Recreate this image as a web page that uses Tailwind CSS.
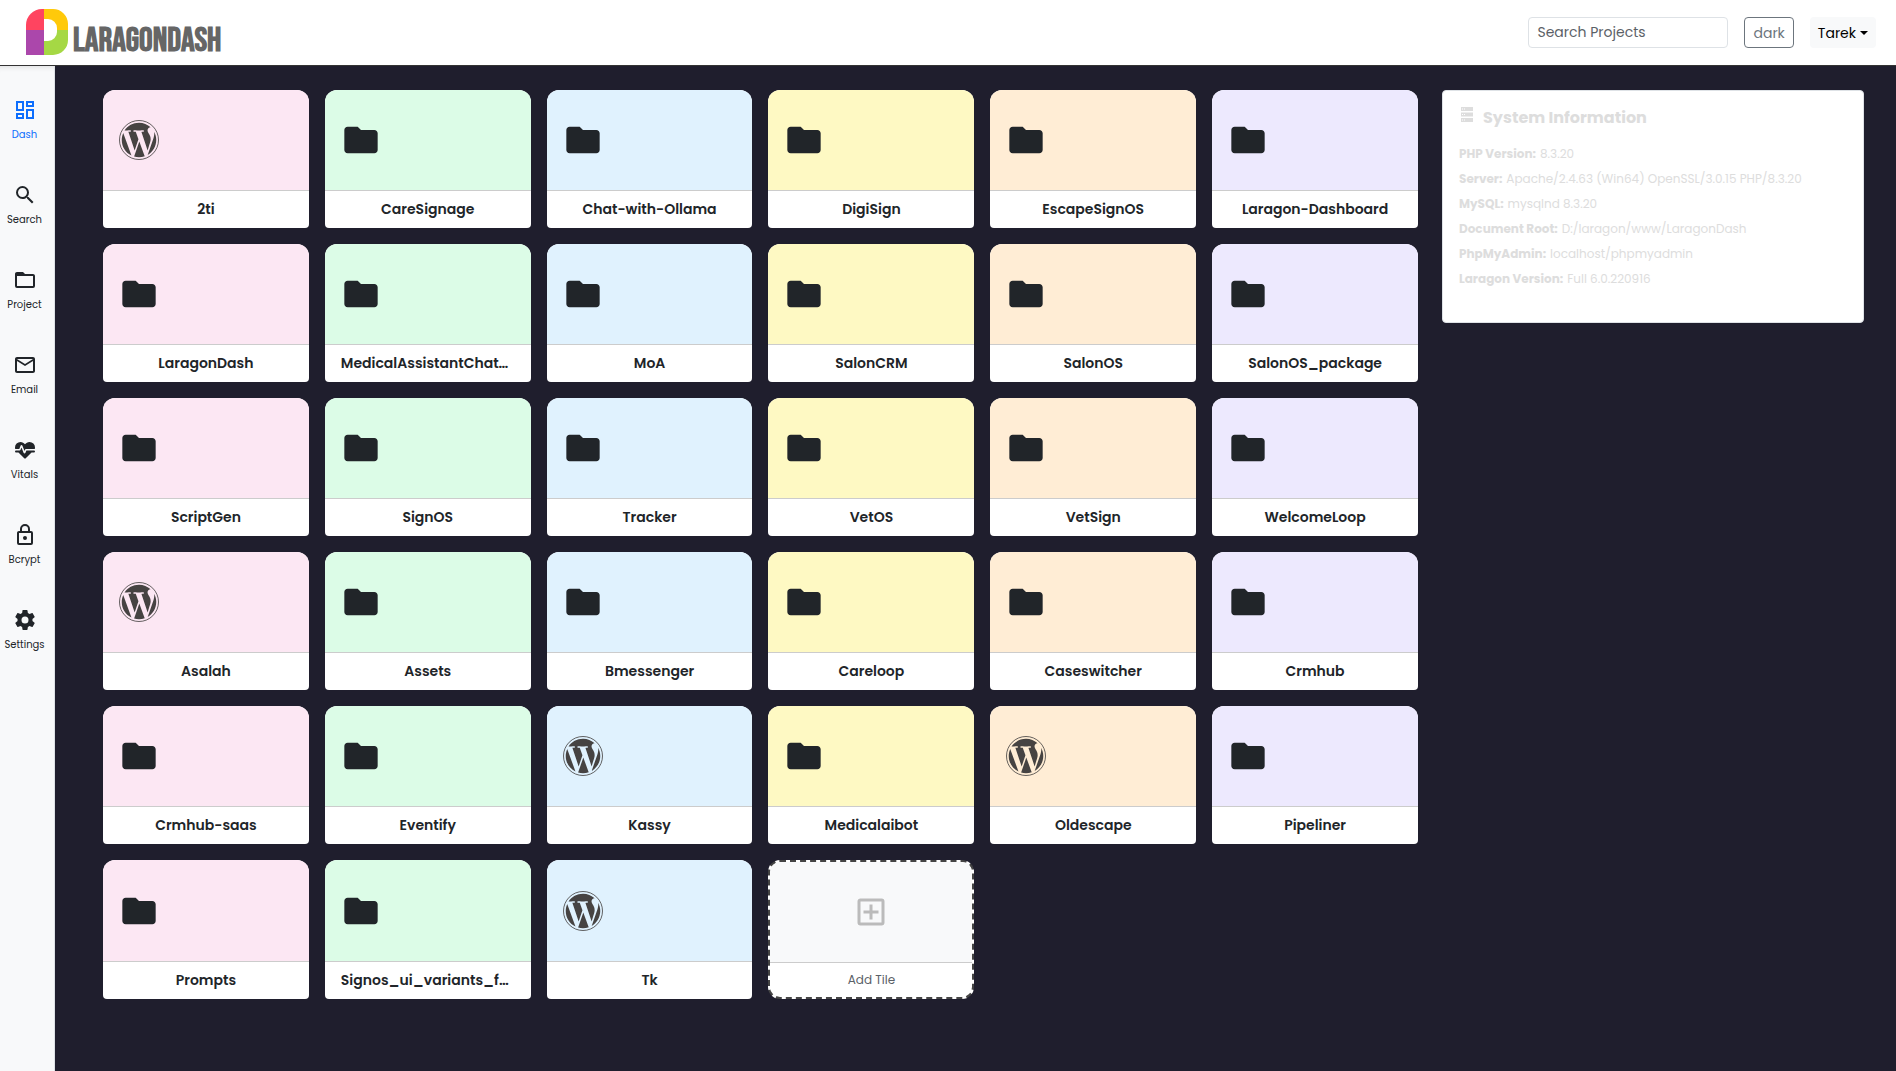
<!DOCTYPE html>
<html lang="en">
<head>
<meta charset="utf-8">
<meta name="viewport" content="width=device-width, initial-scale=1">
<title>LaragonDash</title>
<script src="https://cdn.jsdelivr.net/npm/@tailwindcss/browser@4"></script>
</head>
<body class="flex min-h-screen flex-col bg-[#1f1e2d] font-['Poppins','Inter',sans-serif] text-[#212529]">
<svg class="hidden" aria-hidden="true">
  <symbol id="folder" viewBox="0 0 24 24"><path d="M10 4H4c-1.11 0-2 .89-2 2v12c0 1.1.9 2 2 2h16c1.1 0 2-.9 2-2V8c0-1.11-.9-2-2-2h-8l-2-2z"/></symbol>
  <symbol id="wordpress" viewBox="0 0 24 24"><circle cx="12" cy="12" r="11.700" fill="none" stroke="currentColor" stroke-width=".5"/><path transform="translate(.48 .48) scale(.96)" d="M21.469 6.825c.84 1.537 1.318 3.3 1.318 5.175 0 3.979-2.156 7.456-5.363 9.325l3.295-9.527c.615-1.54.82-2.771.82-3.864 0-.405-.026-.78-.07-1.11m-7.981.105c.647-.03 1.232-.105 1.232-.105.582-.075.514-.93-.067-.899 0 0-1.755.135-2.88.135-1.064 0-2.85-.15-2.85-.15-.585-.03-.661.855-.075.885 0 0 .54.061 1.125.09l1.68 4.605-2.37 7.08L5.354 6.9c.649-.03 1.234-.1 1.234-.1.585-.075.516-.93-.065-.896 0 0-1.746.138-2.874.138-.2 0-.438-.008-.69-.015C4.911 3.15 8.235 1.215 12 1.215c2.809 0 5.365 1.072 7.286 2.833-.046-.003-.091-.009-.141-.009-1.06 0-1.812.923-1.812 1.914 0 .89.513 1.643 1.06 2.531.411.72.89 1.643.89 2.977 0 .915-.354 1.994-.821 3.479l-1.075 3.585-3.9-11.61.001.014zM12 22.784c-1.059 0-2.081-.153-3.048-.437l3.237-9.406 3.315 9.087c.024.053.05.101.078.149-1.12.393-2.325.609-3.582.609M1.211 12c0-1.564.336-3.05.935-4.39L7.29 21.709C3.694 19.96 1.212 16.271 1.211 12"/></symbol>
</svg>

<header class="flex h-[66px] items-center justify-between border-b border-[#333333] bg-white pr-5 pl-[26px]">
  <a href="#" class="flex items-end gap-1 pb-px" aria-label="LaragonDash home">
    <svg class="h-[46px] w-[43px]" viewBox="0 0 43 46" aria-hidden="true">
      <path fill="#ff4460" d="M0 21V16A16 16 0 0 1 16 0H18V21z"/>
      <path fill="#ab47ab" d="M0 21H18V46H0z"/>
      <path fill="#ffc90a" d="M18 0H27A15 15 0 0 1 42 15V21H31V19A9 9 0 0 0 22 10H18z"/>
      <path fill="#a5d844" d="M42 21V31A15 15 0 0 1 27 46H18V32H22A9 9 0 0 0 31 23V21z"/>
    </svg>
    <span class="font-['Bebas_Neue','Anton','Oswald','Roboto_Condensed','Liberation_Sans',sans-serif] text-[34px] leading-7 font-bold text-[#666666]">LARAGONDASH</span>
  </a>
  <div class="flex items-center gap-4 text-sm">
    <input type="text" aria-label="Search Projects" placeholder="Search Projects" class="h-[31px] w-[200px] rounded border border-[#dee2e6] bg-white px-2 placeholder:text-[#5b6167]">
    <button type="button" class="h-[31px] rounded border border-[#6c757d] px-2 text-[#6c757d]">dark</button>
    <button type="button" class="flex h-[31px] items-center gap-1 rounded bg-[#f8f9fa] px-2 text-black">Tarek
      <svg class="h-1 w-2" viewBox="0 0 8 4" aria-hidden="true"><path d="M0 0H8L4 4z"/></svg>
    </button>
  </div>
</header>

<div class="flex grow">
  <nav class="w-[55px] shrink-0 border-r border-[#dee2e6] bg-[#f8f9fa] pt-8 pr-[5px] shadow-[inset_0_6px_6px_-6px_rgba(0,0,0,0.15)]" aria-label="Main">
    <ul id="menu" class="flex flex-col gap-10"></ul>
  </nav>
  <main class="flex grow items-start gap-6 pt-6 pr-8 pl-12">
    <section id="tiles" class="grid grow grid-cols-6 gap-4" aria-label="Projects"></section>
    <aside class="h-[233px] w-[422px] shrink-0 rounded border border-[#dee2e6] bg-white px-4 py-3 text-[#dddddd]">
      <h2 class="flex items-start gap-2 text-base leading-[30px] font-bold">
        <svg class="mt-1 h-4 w-4 fill-current" viewBox="0 0 16 16" aria-hidden="true"><path fill-rule="evenodd" d="M2 0H14V4H2zM3 1.500V2.500H4V1.500zM5 1.500V2.500H6V1.500zM2 5.500H14V9.500H2zM3 7V8H4V7zM5 7V8H6V7zM2 11H14V15H2zM3 12.500V13.500H4V12.500zM5 12.500V13.500H6V12.500z"/></svg>
        System Information
      </h2>
      <dl id="info" class="mt-2 text-xs leading-[25px]"></dl>
    </aside>
  </main>
</div>

<script>
const menu = [
  ['Dash', 'M19 5v2h-4V5h4M9 5v6H5V5h4m10 8v6h-4v-6h4M9 17v2H5v-2h4M21 3h-8v6h8V3zM11 3H3v10h8V3zm10 8h-8v10h8V11zm-10 4H3v6h8v-6z'],
  ['Search', 'M15.5 14h-.79l-.28-.27A6.471 6.471 0 0016 9.5 6.5 6.5 0 109.5 16c1.61 0 3.09-.59 4.23-1.57l.27.28v.79l5 4.99L20.49 19l-4.99-5zm-6 0C7.01 14 5 11.99 5 9.500S7.010 5 9.500 5 14 7.010 14 9.500 11.990 14 9.500 14z'],
  ['Project', 'M20 18H4V8h16m0-2h-8l-2-2H4c-1.11 0-2 .89-2 2v12a2 2 0 002 2h16a2 2 0 002-2V8c0-1.110-.9-2-2-2z'],
  ['Email', 'M22 6c0-1.100-.9-2-2-2H4c-1.100 0-2 .9-2 2v12c0 1.100.9 2 2 2h16c1.100 0 2-.9 2-2V6m-2 0l-8 5-8-5h16m0 12H4V8l8 5 8-5v10z'],
  ['Vitals', 'M7.5 4A5.5 5.5 0 0 0 2 9.5c0 .5.09 1 .22 1.5H6.3l1.27-3.37c.3-.8 1.48-.88 1.86 0L11.5 13l.59-1.42c.13-.33.48-.58.91-.58h8.78c.13-.5.22-1 .22-1.5A5.5 5.5 0 0 0 16.5 4c-1.86 0-3.500.93-4.500 2.340C11 4.930 9.360 4 7.500 4M3 12.500a1 1 0 0 0-1 1 1 1 0 0 0 1 1h2.440L11 20c1 .9 1 .9 2 0l5.560-5.500H21a1 1 0 0 0 1-1 1 1 0 0 0-1-1h-7.600l-.93 2.300c-.4 1.010-1.550.87-1.920.03L8.500 9.500l-.96 2.330c-.15.38-.5.67-.94.67H3z'],
  ['Bcrypt', 'M12 17a2 2 0 01-2-2c0-1.110.89-2 2-2a2 2 0 012 2 2 2 0 01-2 2m6 3V10H6v10h12m0-12a2 2 0 012 2v10a2 2 0 01-2 2H6a2 2 0 01-2-2V10c0-1.110.89-2 2-2h1V6a5 5 0 0110 0v2h1m-6-5a3 3 0 00-3 3v2h6V6a3 3 0 00-3-3z'],
  ['Settings', 'M12 15.5A3.5 3.5 0 018.5 12 3.5 3.5 0 0112 8.5a3.5 3.5 0 013.5 3.5 3.5 3.5 0 01-3.5 3.5m7.43-2.53c.04-.32.07-.64.07-.97 0-.33-.03-.66-.07-1l2.11-1.63c.19-.15.24-.42.12-.64l-2-3.46c-.12-.22-.39-.31-.61-.22l-2.49 1c-.52-.39-1.06-.73-1.69-.98l-.37-2.65A.506.506 0 0014 2h-4c-.25 0-.46.18-.5.42l-.37 2.65c-.63.25-1.17.59-1.69.98l-2.49-1c-.22-.09-.49 0-.61.22l-2 3.46c-.13.22-.07.49.12.64L4.57 11c-.04.34-.07.67-.07 1 0 .33.03.65.07.97l-2.11 1.66c-.19.15-.25.42-.12.64l2 3.46c.12.22.39.3.61.22l2.49-1.01c.52.4 1.06.74 1.69.99l.37 2.65c.04.24.25.42.5.42h4c.25 0 .46-.18.5-.42l.37-2.65c.63-.26 1.17-.59 1.69-.99l2.49 1.01c.22.08.49 0 .61-.22l2-3.46c.12-.22.07-.49-.12-.64l-2.11-1.66z']
];
document.getElementById('menu').innerHTML = menu.map(([name, d], i) => `
  <li><a href="#" class="flex flex-col items-center gap-1 ${i === 0 ? 'text-[#0d6efd]' : 'text-[#212529]'}">
    <svg class="size-6 fill-current" viewBox="0 0 24 24" aria-hidden="true"><path d="${d}"/></svg>
    <span class="text-[10px] leading-[17px]">${name}</span></a></li>`).join('');

const colors = ['bg-[#fce7f3]', 'bg-[#dcfce7]', 'bg-[#e0f2fe]', 'bg-[#fef9c3]', 'bg-[#ffedd5]', 'bg-[#ede9fe]'];
const wordpress = ['2ti', 'Asalah', 'Kassy', 'Oldescape', 'Tk'];
const projects = ['2ti', 'CareSignage', 'Chat-with-Ollama', 'DigiSign', 'EscapeSignOS', 'Laragon-Dashboard',
  'LaragonDash', 'MedicalAssistantChatbot', 'MoA', 'SalonCRM', 'SalonOS', 'SalonOS_package',
  'ScriptGen', 'SignOS', 'Tracker', 'VetOS', 'VetSign', 'WelcomeLoop',
  'Asalah', 'Assets', 'Bmessenger', 'Careloop', 'Caseswitcher', 'Crmhub',
  'Crmhub-saas', 'Eventify', 'Kassy', 'Medicalaibot', 'Oldescape', 'Pipeliner',
  'Prompts', 'Signos_ui_variants_full', 'Tk'];
document.getElementById('tiles').innerHTML = projects.map((name, i) => `
  <a href="#" class="flex min-w-0 flex-col overflow-hidden rounded-t-xl rounded-b bg-white">
    <span class="flex min-h-[101px] grow items-center border-b border-[#cccccc] px-4 ${colors[i % 6]}">
      ${wordpress.includes(name)
        ? '<svg class="size-10 fill-current text-[#464342]" aria-hidden="true"><use href="#wordpress"/></svg>'
        : '<svg class="size-10 fill-current" aria-hidden="true"><use href="#folder"/></svg>'}
    </span>
    <span class="block h-[37px] truncate px-4 text-center text-sm leading-[37px] font-semibold">${name}</span>
  </a>`).join('') + `
  <button type="button" class="h-[139px] overflow-hidden rounded-xl border-2 border-dashed border-[#444444] bg-white">
    <span class="flex h-[101px] items-center justify-center border-b border-[#cccccc] bg-[#f8f9fa]">
      <svg class="size-9 fill-[#bbbbbb]" viewBox="0 0 24 24" aria-hidden="true"><path d="M19 19V5H5v14h14m0-16a2 2 0 012 2v14a2 2 0 01-2 2H5a2 2 0 01-2-2V5c0-1.110.9-2 2-2h14m-8 4h2v4h4v2h-4v4h-2v-4H7v-2h4V7z"/></svg>
    </span>
    <span class="block text-xs leading-[34px] text-[#5b6167]">Add Tile</span>
  </button>`;

document.getElementById('info').innerHTML = [
  ['PHP Version:', '8.3.20'],
  ['Server:', 'Apache/2.4.63 (Win64) OpenSSL/3.0.15 PHP/8.3.20'],
  ['MySQL:', 'mysqlnd 8.3.20'],
  ['Document Root:', 'D:/laragon/www/LaragonDash'],
  ['PhpMyAdmin:', 'localhost/phpmyadmin'],
  ['Laragon Version:', 'Full 6.0.220916']
].map(([k, v]) => `<div class="flex gap-1"><dt class="font-bold">${k}</dt><dd>${v}</dd></div>`).join('');
</script>
</body>
</html>
